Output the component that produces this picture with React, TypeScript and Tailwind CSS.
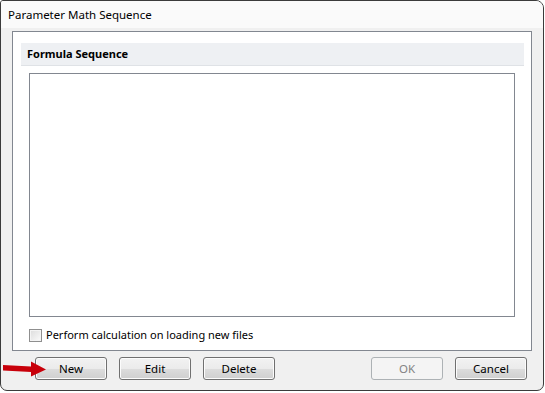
const font = "font-['Noto_Sans',sans-serif]";

function DialogButton({ label, disabled = false }: { label: string; disabled?: boolean }) {
  return (
    <button
      disabled={disabled}
      className={
        disabled
          ? "flex h-[23px] w-[72px] items-center justify-center rounded-[3px] border border-[#adb2b5] bg-[#f4f4f4] text-[11.5px] text-[#838383]"
          : "flex h-[23px] w-[72px] items-center justify-center rounded-[3px] border border-[#707070] bg-[linear-gradient(#f2f2f2_0%,#ebebeb_50%,#dddddd_50%,#cfcfcf_100%)] text-[11.5px] text-black shadow-[inset_0_0_0_1px_#fcfcfc]"
      }
    >
      {label}
    </button>
  );
}

export default function App() {
  return (
    <div className={`relative h-[393px] w-[545px] bg-white ${font}`}>
      <div className="flex h-[391px] w-[544px] flex-col overflow-hidden rounded-tl-[3px] rounded-tr-[8px] rounded-b-[7px] border border-[#3b3b3b] bg-[#f0f0f0]">
        <div className="flex h-[27px] items-center bg-[#fafafa] pl-[7px] pt-[1px] text-[11.5px] text-black">
          Parameter Math Sequence
        </div>

        <div className="flex flex-1 flex-col px-[11px] pt-[3px]">
          <div className="flex h-[320px] flex-col border border-[#828790] bg-white pl-[8px] pr-[7px] pt-[11px]">
            <div className="flex h-[23px] items-center border-b border-[#dfe2e6] bg-[#eef0f3] pl-[6px] text-[11px] font-bold text-black">
              Formula Sequence
            </div>
            <div className="ml-[8px] mr-[9px] mt-[7px] h-[244px] border border-[#828790] bg-white" />
            <label className="ml-[8px] mt-[10px] flex items-center gap-[4px] text-[11px] text-black">
              <span className="h-[13px] w-[13px] border border-[#8f8f8f] bg-[linear-gradient(135deg,#dcdcdc,#fbfbfb)] shadow-[inset_0_0_0_1px_#f4f4f4]" />
              Perform calculation on loading new files
            </label>
          </div>

          <div className="mt-[6px] flex pl-[23px] pr-[5px]">
            <div className="flex gap-[12px]">
              <DialogButton label="New" />
              <DialogButton label="Edit" />
              <DialogButton label="Delete" />
            </div>
            <div className="ml-auto flex gap-[12px]">
              <DialogButton label="OK" disabled />
              <DialogButton label="Cancel" />
            </div>
          </div>
        </div>
      </div>

      <svg className="absolute left-[3px] top-[361px]" width="44" height="16" viewBox="0 0 44 16">
        <path d="M0 4 L28 5.5 L28 0.5 L43 8.5 L28 15.5 L28 11 L0 9.5 Z" fill="#c8000a" />
      </svg>
    </div>
  );
}
